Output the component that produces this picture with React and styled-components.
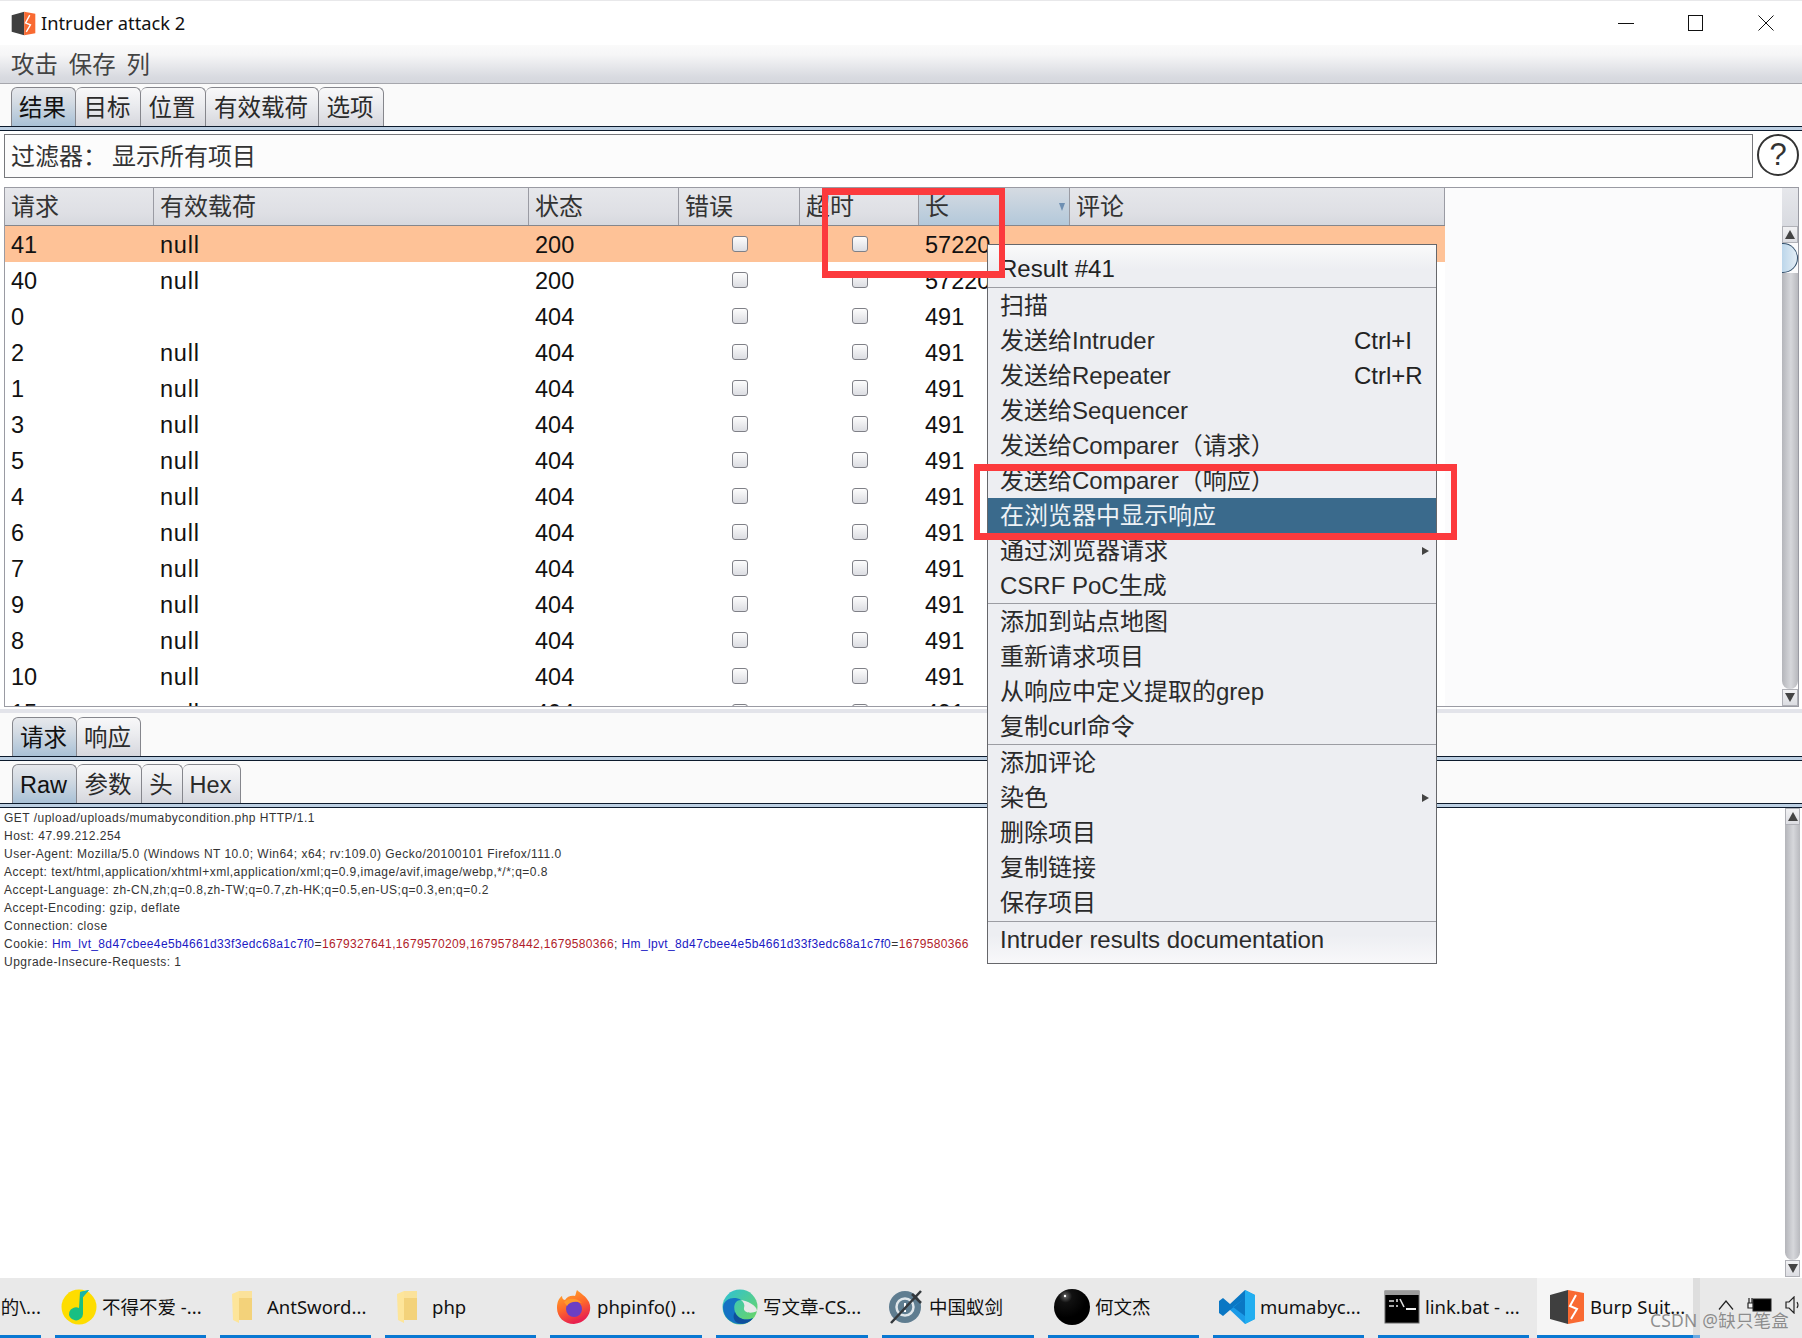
import React from "react";
import styled, { createGlobalStyle } from "styled-components";

const GlobalStyle = createGlobalStyle`
  html, body { margin: 0; padding: 0; background: #fff; }
  * { box-sizing: border-box; }
`;

const uiFont = `"Liberation Sans", "Noto Sans CJK SC", sans-serif`;
const sysFont = `"Noto Sans", "Noto Sans CJK SC", sans-serif`;

const Page = styled.div`
  position: relative;
  width: 1802px;
  height: 1338px;
  overflow: hidden;
  display: flex;
  flex-direction: column;
  background: #fff;
  font-family: ${uiFont};
  line-height: 28px;
  color: #222;
`;

const TitleBar = styled.div`
  height: 45px;
  flex: none;
  display: flex;
  align-items: center;
  padding-left: 11px;
  border-top: 1px solid #e8e8ea;
  background: #fff;
`;

const TitleText = styled.span`
  margin-left: 5px;
  font-family: ${sysFont};
  font-size: 18.3px;
  color: #111;
`;

const WindowButtons = styled.div`
  margin-left: auto;
  display: flex;
  align-items: center;
  gap: 54px;
  padding-right: 28px;
`;

const MenuBar = styled.div`
  height: 39px;
  flex: none;
  display: flex;
  align-items: center;
  gap: 11px;
  padding: 2px 0 0 11px;
  font-size: 23.4px;
  color: #444;
  background: linear-gradient(#fafafa 0%, #f6f6f7 25%, #d8dae0 85%, #d6d8de 100%);
  border-bottom: 1px solid #a6a7ad;
`;

const TabStrip = styled.div`
  flex: none;
  height: ${(p) => p.$height}px;
  display: flex;
  align-items: flex-end;
  padding-left: ${(p) => p.$left}px;
  background: #fafafa;
`;

const Tab = styled.div`
  height: 39px;
  width: ${(p) => p.$width}px;
  display: flex;
  align-items: center;
  justify-content: center;
  padding: 2px 2px 0 0;
  font-size: 23.5px;
  color: ${(p) => (p.$active ? "#111" : "#2a2a2a")};
  border: 1px solid #85868c;
  border-bottom: none;
  border-left-width: ${(p) => (p.$first ? 1 : 0)}px;
  border-radius: 6px 6px 0 0;
  background: ${(p) =>
    p.$active
      ? "linear-gradient(#e6e8ec 0%, #d5dce4 35%, #a9c1d6 100%)"
      : "linear-gradient(#f8f8f9 0%, #ecedf0 40%, #d6d7dd 100%)"};
`;

const TabLine = styled.div`
  flex: none;
  height: 5px;
  background: #bccfe2;
  border-top: 1px solid #0c1a2c;
  border-bottom: 1px solid #0c1a2c;
`;

const FilterRow = styled.div`
  flex: none;
  height: 44px;
  margin-top: 3px;
  padding-left: 4px;
  display: flex;
  gap: 4px;
`;

const FilterBox = styled.div`
  width: 1749px;
  display: flex;
  align-items: center;
  gap: 5px;
  padding: 2px 0 0 6px;
  font-size: 24px;
  color: #333;
  background: #fcfcfc;
  border: 1px solid #77787c;
`;

const HelpCircle = styled.div`
  width: 42px;
  height: 42px;
  border: 2px solid #333;
  border-radius: 50%;
  display: flex;
  align-items: center;
  justify-content: center;
  font-size: 31px;
  color: #333;
`;

const TableFrame = styled.div`
  flex: none;
  height: 520px;
  width: 1795px;
  margin: 9px 0 0 4px;
  display: flex;
  overflow: hidden;
  background: #fbfbfc;
  border: 1px solid #9a9ba3;
`;

const Table = styled.div`
  width: 1440px;
  flex: none;
  background: #fff;
`;

const HeaderRow = styled.div`
  height: 38px;
  display: flex;
  border-bottom: 1px solid #85868c;
`;

const HeaderCell = styled.div`
  position: relative;
  width: ${(p) => p.$width}px;
  flex: none;
  display: flex;
  align-items: center;
  padding-left: 6px;
  font-size: 24px;
  color: #333;
  border-right: 1px solid #9a9ba3;
  background: ${(p) =>
    p.$sorted
      ? "linear-gradient(#d5dbe2 0%, #b3c8da 100%)"
      : "linear-gradient(#e6e7eb 0%, #dedfe4 70%, #d6d8de 100%)"};
`;

const SortArrow = styled.span`
  position: absolute;
  right: 4px;
  top: 15px;
  width: 0;
  height: 0;
  border-left: 3.5px solid transparent;
  border-right: 3.5px solid transparent;
  border-top: 8px solid #6d8fb2;
`;

const Row = styled.div`
  height: 36px;
  display: flex;
  background: ${(p) => (p.$selected ? "#fec297" : "#fff")};
`;

const Cell = styled.div`
  width: ${(p) => p.$width}px;
  flex: none;
  display: flex;
  align-items: center;
  justify-content: ${(p) => (p.$center ? "center" : "flex-start")};
  padding-left: ${(p) => (p.$center ? 0 : 6)}px;
  padding-top: ${(p) => (p.$center ? 0 : 2)}px;
  font-size: 23.5px;
  color: #111;
`;

const Payload = styled.span`
  letter-spacing: 0.8px;
`;

const Check = styled.span`
  width: 16px;
  height: 16px;
  border: 1px solid #7f8087;
  border-radius: 3px;
  background: linear-gradient(#fdfdfd, #dcdde2);
`;

const ScrollColumn = styled.div`
  margin-left: auto;
  width: ${(p) => p.$width}px;
  flex: none;
  display: flex;
  flex-direction: column;
`;

const ScrollCap = styled.div`
  height: 38px;
  flex: none;
  background: linear-gradient(#e6e7eb, #d8dae0);
`;

const ScrollButton = styled.div`
  height: 17px;
  flex: none;
  display: flex;
  align-items: center;
  justify-content: center;
  background: linear-gradient(#f2f2f4, #dcdde2);
  border: 1px solid #b0b1b7;
`;

const ArrowUp = styled.span`
  width: 0;
  height: 0;
  border-left: 5px solid transparent;
  border-right: 5px solid transparent;
  border-bottom: 9px solid #444;
`;

const ArrowDown = styled(ArrowUp)`
  border-bottom: none;
  border-top: 9px solid #444;
`;

const ScrollThumb = styled.div`
  height: 30px;
  flex: none;
  border: 1px solid #33506c;
  border-left: none;
  border-radius: 0 15px 15px 0;
  background: linear-gradient(90deg, #bcd6ea, #e4eef6);
`;

const ScrollTrack = styled.div`
  flex: 1;
  border-radius: 0 0 12px 12px;
  background: linear-gradient(90deg, #b4b5ba, #d6d7db 55%, #b8b9be);
`;

const SplitBand = styled.div`
  flex: none;
  height: 4px;
  margin-top: 2px;
  background: #e3e4ea;
`;

const Body = styled.div`
  flex: 1;
  min-height: 0;
  display: flex;
  padding: 0 2px 1px 4px;
`;

const RequestText = styled.div`
  padding-top: 1px;
  font-size: 12px;
  line-height: 18px;
  letter-spacing: 0.48px;
  white-space: pre;
  color: #333;
`;

const Key = styled.span`
  color: #1a1ac4;
  letter-spacing: 0.35px;
`;

const Val = styled.span`
  color: #b01c2a;
  letter-spacing: 0.35px;
`;

const TaskBar = styled.div`
  flex: none;
  height: 60px;
  display: flex;
  background: #e9e9e9;
`;

const TaskItem = styled.div`
  width: ${(p) => p.$width}px;
  margin-left: ${(p) => p.$gap}px;
  flex: none;
  display: flex;
  align-items: center;
  justify-content: ${(p) => (p.$clipped ? "flex-end" : "flex-start")};
  gap: 5px;
  padding-left: ${(p) => (p.$clipped ? 0 : p.$pad ? 12 : 6)}px;
  padding-top: 1px;
  font-family: ${sysFont};
  font-size: 18.5px;
  color: #111;
  white-space: nowrap;
  overflow: hidden;
  background: ${(p) => (p.$active ? "#f5f5f5" : "transparent")};
  border-bottom: 3px solid #0a78d2;
`;

const TaskIcon = styled.span`
  width: ${(p) => p.$width || 36}px;
  height: 36px;
  flex: none;
  display: flex;
  align-items: center;
  justify-content: flex-start;
`;

const ActiveEdge = styled.div`
  width: 7px;
  flex: none;
  background: #dedede;
  border-bottom: 3px solid #6aa9e2;
`;

const Tray = styled.div`
  flex: 1;
  display: flex;
  align-items: center;
  padding: 0 0 6px 18px;
  overflow: hidden;
`;

const TrayIcon = styled.svg`
  flex: none;
  margin-left: ${(p) => p.$gap || 0}px;
`;

const Watermark = styled.div`
  position: absolute;
  left: 1650px;
  top: 1307px;
  font-family: ${sysFont};
  font-size: 17.5px;
  line-height: 26px;
  letter-spacing: 0.2px;
  color: rgba(110, 110, 110, 0.75);
`;

const ContextMenu = styled.div`
  position: absolute;
  left: 987px;
  top: 244px;
  width: 450px;
  height: 720px;
  display: flex;
  flex-direction: column;
  border: 1px solid #66676b;
  background: linear-gradient(#fafafa 0, #edeef2 24px, #edeef2 690px, #f8f8fa 100%);
`;

const MenuHead = styled.div`
  height: 42px;
  flex: none;
  display: flex;
  align-items: flex-end;
  padding: 0 0 4px 12px;
  font-size: 24px;
  color: #222;
`;

const MenuSep = styled.div`
  height: 1px;
  flex: none;
  margin-top: ${(p) => p.$top || 0}px;
  background: #9c9da3;
`;

const MenuItem = styled.div`
  height: 35px;
  flex: none;
  display: flex;
  align-items: center;
  padding: 0 12px;
  font-size: 24px;
  color: ${(p) => (p.$selected ? "#eef2f6" : "#2a2a2a")};
  background: ${(p) => (p.$selected ? "#3a6a8c" : "transparent")};
`;

const Shortcut = styled.span`
  position: absolute;
  left: 366px;
  font-size: 24px;
  color: #222;
`;

const SubArrow = styled.span`
  margin-left: auto;
  margin-right: -5px;
  width: 0;
  height: 0;
  border-top: 4.5px solid transparent;
  border-bottom: 4.5px solid transparent;
  border-left: 7px solid #444;
`;

const RedBox = styled.div`
  position: absolute;
  left: ${(p) => p.$x}px;
  top: ${(p) => p.$y}px;
  width: ${(p) => p.$w}px;
  height: ${(p) => p.$h}px;
  border-style: solid;
  border-color: #fc3a3d;
  border-width: 7px 6px;
  pointer-events: none;
`;

const COLS = [149, 375, 150, 121, 119, 151, 375];
const HEADERS = ["请求", "有效载荷", "状态", "错误", "超时", "长", "评论"];
const ROWS = [
  [41, "null", 200, 57220],
  [40, "null", 200, 57220],
  [0, "", 404, 491],
  [2, "null", 404, 491],
  [1, "null", 404, 491],
  [3, "null", 404, 491],
  [5, "null", 404, 491],
  [4, "null", 404, 491],
  [6, "null", 404, 491],
  [7, "null", 404, 491],
  [9, "null", 404, 491],
  [8, "null", 404, 491],
  [10, "null", 404, 491],
  [15, "null", 404, 491],
];

const BurpIcon = ({ size = 36 }) => (
  <svg width={size} height={size} viewBox="0 0 36 36">
    <path d="M1 6 L19 1 V35 L1 30 Z" fill="#3f3f3f" />
    <path d="M19 1 L35 4 V32 L19 35 Z" fill="#f96a32" />
    <path d="M27 6 L21 17 L28 20 L22 30" fill="none" stroke="#fff" strokeWidth="2" />
  </svg>
);

const MusicIcon = () => (
  <svg width="36" height="36" viewBox="0 0 36 36">
    <ellipse cx="18" cy="18" rx="17.5" ry="17.5" fill="#fedd00" />
    <path d="M19 3 L28 1 L22 8 L22 25 A7 6.5 0 1 1 18 19 Z" fill="#19bf83" />
    <path d="M19 3 L28 1 L22 8 L19 9 Z" fill="#1bb5a6" />
  </svg>
);

const FolderIcon = () => (
  <svg width="20" height="34" viewBox="0 0 20 34">
    <path d="M7 1 H20 V30 H7 Z" fill="#f3d27a" />
    <path d="M0 4 L7 1 V33 L1 30 Z" fill="#fde59a" />
    <path d="M7 1 H20 V8 H7 Z" fill="#fbe29a" />
  </svg>
);

const FirefoxIcon = () => (
  <svg width="36" height="36" viewBox="0 0 36 36">
    <defs>
      <linearGradient id="ff" x1="0" y1="0" x2="0.4" y2="1">
        <stop offset="0" stopColor="#ffb22a" />
        <stop offset="0.55" stopColor="#ff6a2a" />
        <stop offset="1" stopColor="#e8214f" />
      </linearGradient>
    </defs>
    <path d="M21 1 C24 4 30 7 33 13 C37 22 31 34 18 35 C8 35 1 28 1 19 C1 13 3 9 6 7 C6 10 8 11 9 11 C11 7 16 6 19 7 C20 5 20 3 21 1 Z" fill="url(#ff)" />
    <circle cx="18" cy="20" r="8" fill="#6b3fc4" />
    <path d="M8 13 C13 8 21 9 26 14 C21 12 14 12 11 17 Z" fill="#ff9a2c" />
  </svg>
);

const EdgeIcon = () => (
  <svg width="36" height="36" viewBox="0 0 36 36">
    <defs>
      <linearGradient id="eg" x1="0" y1="0" x2="1" y2="1">
        <stop offset="0" stopColor="#2cc0d8" />
        <stop offset="1" stopColor="#6fd75c" />
      </linearGradient>
    </defs>
    <circle cx="18" cy="18" r="17.5" fill="url(#eg)" />
    <path d="M1 18 C2 9 13 7 19 11 C13 11 11 17 13 23 C15 29 23 33 31 29 C27 35 17 37 10 33 C4 30 1 24 1 18 Z" fill="#1472c4" />
    <path d="M13 23 C15 29 23 33 31 29 C27 35 19 36 14 33 C11 30 11 26 13 23 Z" fill="#0f4f9c" />
    <path d="M19 11 C25 12 35 16 35 22 C30 25 21 24 22 19 C23 16 22 13 19 11 Z" fill="#e9e9e9" />
  </svg>
);

const AntIcon = () => (
  <svg width="36" height="36" viewBox="0 0 36 36">
    <circle cx="17" cy="18" r="16" fill="#5f7d90" />
    <circle cx="17" cy="18" r="8.5" fill="none" stroke="#dfe6ea" strokeWidth="2.5" />
    <path d="M16 14 H18 V20 H16 Z M16 21 H18 V23 H16 Z" fill="#fff" />
    <path d="M33 2 L3 34" stroke="#33383c" strokeWidth="2.5" />
    <path d="M24 5 L33 14" stroke="#33383c" strokeWidth="2.5" />
  </svg>
);

const BallIcon = () => (
  <svg width="36" height="36" viewBox="0 0 36 36">
    <defs>
      <radialGradient id="bl" cx="0.32" cy="0.2" r="0.6">
        <stop offset="0" stopColor="#666" />
        <stop offset="0.3" stopColor="#111" />
        <stop offset="1" stopColor="#000" />
      </radialGradient>
    </defs>
    <circle cx="18" cy="18" r="18" fill="url(#bl)" />
    <circle cx="11" cy="7" r="1.2" fill="#fff" />
  </svg>
);

const CodeIcon = () => (
  <svg width="36" height="36" viewBox="0 0 36 36">
    <path d="M26 1 L36 6 V30 L26 35 L9 19 L26 8 Z" fill="#1b9be8" />
    <path d="M26 1 L36 6 V30 L26 35 Z" fill="#22aef0" />
    <path d="M26 9 L11 21 L4 27 L0 24 V12 L4 9 L11 15 L26 1 Z M26 27 L14 18 L26 9 Z" fill="#0a77c4" fillRule="evenodd" />
  </svg>
);

const CmdIcon = () => (
  <svg width="36" height="36" viewBox="0 0 36 36">
    <rect x="1" y="2" width="34" height="32" fill="#000" stroke="#666" />
    <rect x="1" y="2" width="34" height="4" fill="#9b9b9b" />
    <path d="M5 12 H10 M5 17 H10 M13 10 V13 M13 16 V18 M16 10 L20 18" stroke="#ddd" strokeWidth="1.6" />
    <path d="M22 20 H32" stroke="#eee" strokeWidth="2" />
  </svg>
);

const Tabs = ({ items, active = 0 }) =>
  items.map(([label, width], i) => (
    <Tab key={label} $width={width} $active={i === active} $first={i === 0}>
      {label}
    </Tab>
  ));

const App = () => {
  return (
    <Page>
      <GlobalStyle />
      <TitleBar>
        <BurpIcon size={25} />
        <TitleText>Intruder attack 2</TitleText>
        <WindowButtons>
          <svg width="16" height="16" viewBox="0 0 16 16">
            <path d="M0 8.5 H16" stroke="#111" strokeWidth="1" />
          </svg>
          <svg width="16" height="16" viewBox="0 0 16 16">
            <rect x="0.5" y="0.5" width="14" height="15" fill="none" stroke="#111" />
          </svg>
          <svg width="16" height="16" viewBox="0 0 16 16">
            <path d="M0.5 0.5 L15.5 15.5 M15.5 0.5 L0.5 15.5" stroke="#111" strokeWidth="1" />
          </svg>
        </WindowButtons>
      </TitleBar>
      <MenuBar>
        <span>攻击</span>
        <span>保存</span>
        <span>列</span>
      </MenuBar>
      <TabStrip $height={42} $left={11}>
        <Tabs items={[["结果", 65], ["目标", 65], ["位置", 65], ["有效载荷", 113], ["选项", 65]]} />
      </TabStrip>
      <TabLine />
      <FilterRow>
        <FilterBox>
          <span>过滤器：</span>
          <span>显示所有项目</span>
        </FilterBox>
        <HelpCircle>?</HelpCircle>
      </FilterRow>
      <TableFrame>
        <Table>
          <HeaderRow>
            {HEADERS.map((h, i) => (
              <HeaderCell key={h} $width={COLS[i]} $sorted={h === "长"}>
                {h}
                {h === "长" && <SortArrow />}
              </HeaderCell>
            ))}
          </HeaderRow>
          {ROWS.map((r, i) => (
            <Row key={r[0]} $selected={i === 0}>
              <Cell $width={COLS[0]}>{r[0]}</Cell>
              <Cell $width={COLS[1]}>
                <Payload>{r[1]}</Payload>
              </Cell>
              <Cell $width={COLS[2]}>{r[2]}</Cell>
              <Cell $width={COLS[3]} $center>
                <Check />
              </Cell>
              <Cell $width={COLS[4]} $center>
                <Check />
              </Cell>
              <Cell $width={COLS[5]}>{r[3]}</Cell>
              <Cell $width={COLS[6]} />
            </Row>
          ))}
        </Table>
        <ScrollColumn $width={16}>
          <ScrollCap />
          <ScrollButton>
            <ArrowUp />
          </ScrollButton>
          <ScrollThumb />
          <ScrollTrack />
          <ScrollButton>
            <ArrowDown />
          </ScrollButton>
        </ScrollColumn>
      </TableFrame>
      <SplitBand />
      <TabStrip $height={43} $left={12}>
        <Tabs items={[["请求", 65], ["响应", 64]]} />
      </TabStrip>
      <TabLine />
      <TabStrip $height={42} $left={12}>
        <Tabs items={[["Raw", 65], ["参数", 65], ["头", 41], ["Hex", 58]]} />
      </TabStrip>
      <TabLine />
      <Body>
        <RequestText>
          {`GET /upload/uploads/mumabycondition.php HTTP/1.1
Host: 47.99.212.254
User-Agent: Mozilla/5.0 (Windows NT 10.0; Win64; x64; rv:109.0) Gecko/20100101 Firefox/111.0
Accept: text/html,application/xhtml+xml,application/xml;q=0.9,image/avif,image/webp,*/*;q=0.8
Accept-Language: zh-CN,zh;q=0.8,zh-TW;q=0.7,zh-HK;q=0.5,en-US;q=0.3,en;q=0.2
Accept-Encoding: gzip, deflate
Connection: close
Cookie: `}
          <Key>Hm_lvt_8d47cbee4e5b4661d33f3edc68a1c7f0</Key>=
          <Val>1679327641,1679570209,1679578442,1679580366</Val>;{" "}
          <Key>Hm_lpvt_8d47cbee4e5b4661d33f3edc68a1c7f0</Key>=<Val>1679580366</Val>
          {`
Upgrade-Insecure-Requests: 1`}
        </RequestText>
        <ScrollColumn $width={15}>
          <ScrollButton>
            <ArrowUp />
          </ScrollButton>
          <ScrollTrack />
          <ScrollButton>
            <ArrowDown />
          </ScrollButton>
        </ScrollColumn>
      </Body>
      <TaskBar>
        <TaskItem $width={41} $gap={0} $clipped>
          的\...
        </TaskItem>
        <TaskItem $width={151} $gap={14}>
          <TaskIcon><MusicIcon /></TaskIcon>不得不爱 -...
        </TaskItem>
        <TaskItem $width={151} $gap={14} $pad>
          <TaskIcon $width={30}><FolderIcon /></TaskIcon>AntSword...
        </TaskItem>
        <TaskItem $width={151} $gap={14} $pad>
          <TaskIcon $width={30}><FolderIcon /></TaskIcon>php
        </TaskItem>
        <TaskItem $width={152} $gap={14}>
          <TaskIcon><FirefoxIcon /></TaskIcon>phpinfo() ...
        </TaskItem>
        <TaskItem $width={152} $gap={14}>
          <TaskIcon><EdgeIcon /></TaskIcon>写文章-CS...
        </TaskItem>
        <TaskItem $width={152} $gap={14}>
          <TaskIcon><AntIcon /></TaskIcon>中国蚁剑
        </TaskItem>
        <TaskItem $width={151} $gap={14}>
          <TaskIcon><BallIcon /></TaskIcon>何文杰
        </TaskItem>
        <TaskItem $width={151} $gap={14}>
          <TaskIcon><CodeIcon /></TaskIcon>mumabyc...
        </TaskItem>
        <TaskItem $width={151} $gap={14}>
          <TaskIcon><CmdIcon /></TaskIcon>link.bat - ...
        </TaskItem>
        <TaskItem $width={156} $gap={8} $active $pad>
          <TaskIcon><BurpIcon /></TaskIcon>Burp Suit...
        </TaskItem>
        <ActiveEdge />
        <Tray>
          <TrayIcon width="16" height="10" viewBox="0 0 16 10">
            <path d="M1 9.5 L8 1 L15 9.5" fill="none" stroke="#222" strokeWidth="1.2" />
          </TrayIcon>
          <TrayIcon $gap={13} width="25" height="18" viewBox="0 0 25 18">
            <rect x="6" y="3" width="18" height="12" fill="#000" stroke="#222" />
            <path d="M1 7 H6 V12 H1 Z M2 2 V7 M5 2 V7" fill="#f4f4f4" stroke="#222" strokeWidth="1.2" />
          </TrayIcon>
          <TrayIcon $gap={13} width="17" height="18" viewBox="0 0 17 18">
            <path d="M1 6 H4 L9 1 V17 L4 12 H1 Z" fill="none" stroke="#222" strokeWidth="1.2" />
            <path d="M12 6 Q14 9 12 12" fill="none" stroke="#222" strokeWidth="1.1" />
          </TrayIcon>
        </Tray>
      </TaskBar>

      <ContextMenu>
        <MenuHead>Result #41</MenuHead>
        <MenuSep />
        <MenuItem>扫描</MenuItem>
        <MenuItem>发送给Intruder<Shortcut>Ctrl+I</Shortcut></MenuItem>
        <MenuItem>发送给Repeater<Shortcut>Ctrl+R</Shortcut></MenuItem>
        <MenuItem>发送给Sequencer</MenuItem>
        <MenuItem>发送给Comparer（请求）</MenuItem>
        <MenuItem>发送给Comparer（响应）</MenuItem>
        <MenuItem $selected>在浏览器中显示响应</MenuItem>
        <MenuItem>通过浏览器请求<SubArrow /></MenuItem>
        <MenuItem>CSRF PoC生成</MenuItem>
        <MenuSep />
        <MenuItem>添加到站点地图</MenuItem>
        <MenuItem>重新请求项目</MenuItem>
        <MenuItem>从响应中定义提取的grep</MenuItem>
        <MenuItem>复制curl命令</MenuItem>
        <MenuSep />
        <MenuItem>添加评论</MenuItem>
        <MenuItem>染色<SubArrow /></MenuItem>
        <MenuItem>删除项目</MenuItem>
        <MenuItem>复制链接</MenuItem>
        <MenuItem>保存项目</MenuItem>
        <MenuSep $top={1} />
        <MenuItem>Intruder results documentation</MenuItem>
      </ContextMenu>

      <RedBox $x={822} $y={188} $w={183} $h={90} />
      <RedBox $x={974} $y={464} $w={483} $h={76} />
      <Watermark>CSDN @缺只笔盒</Watermark>
    </Page>
  );
};

export default App;
